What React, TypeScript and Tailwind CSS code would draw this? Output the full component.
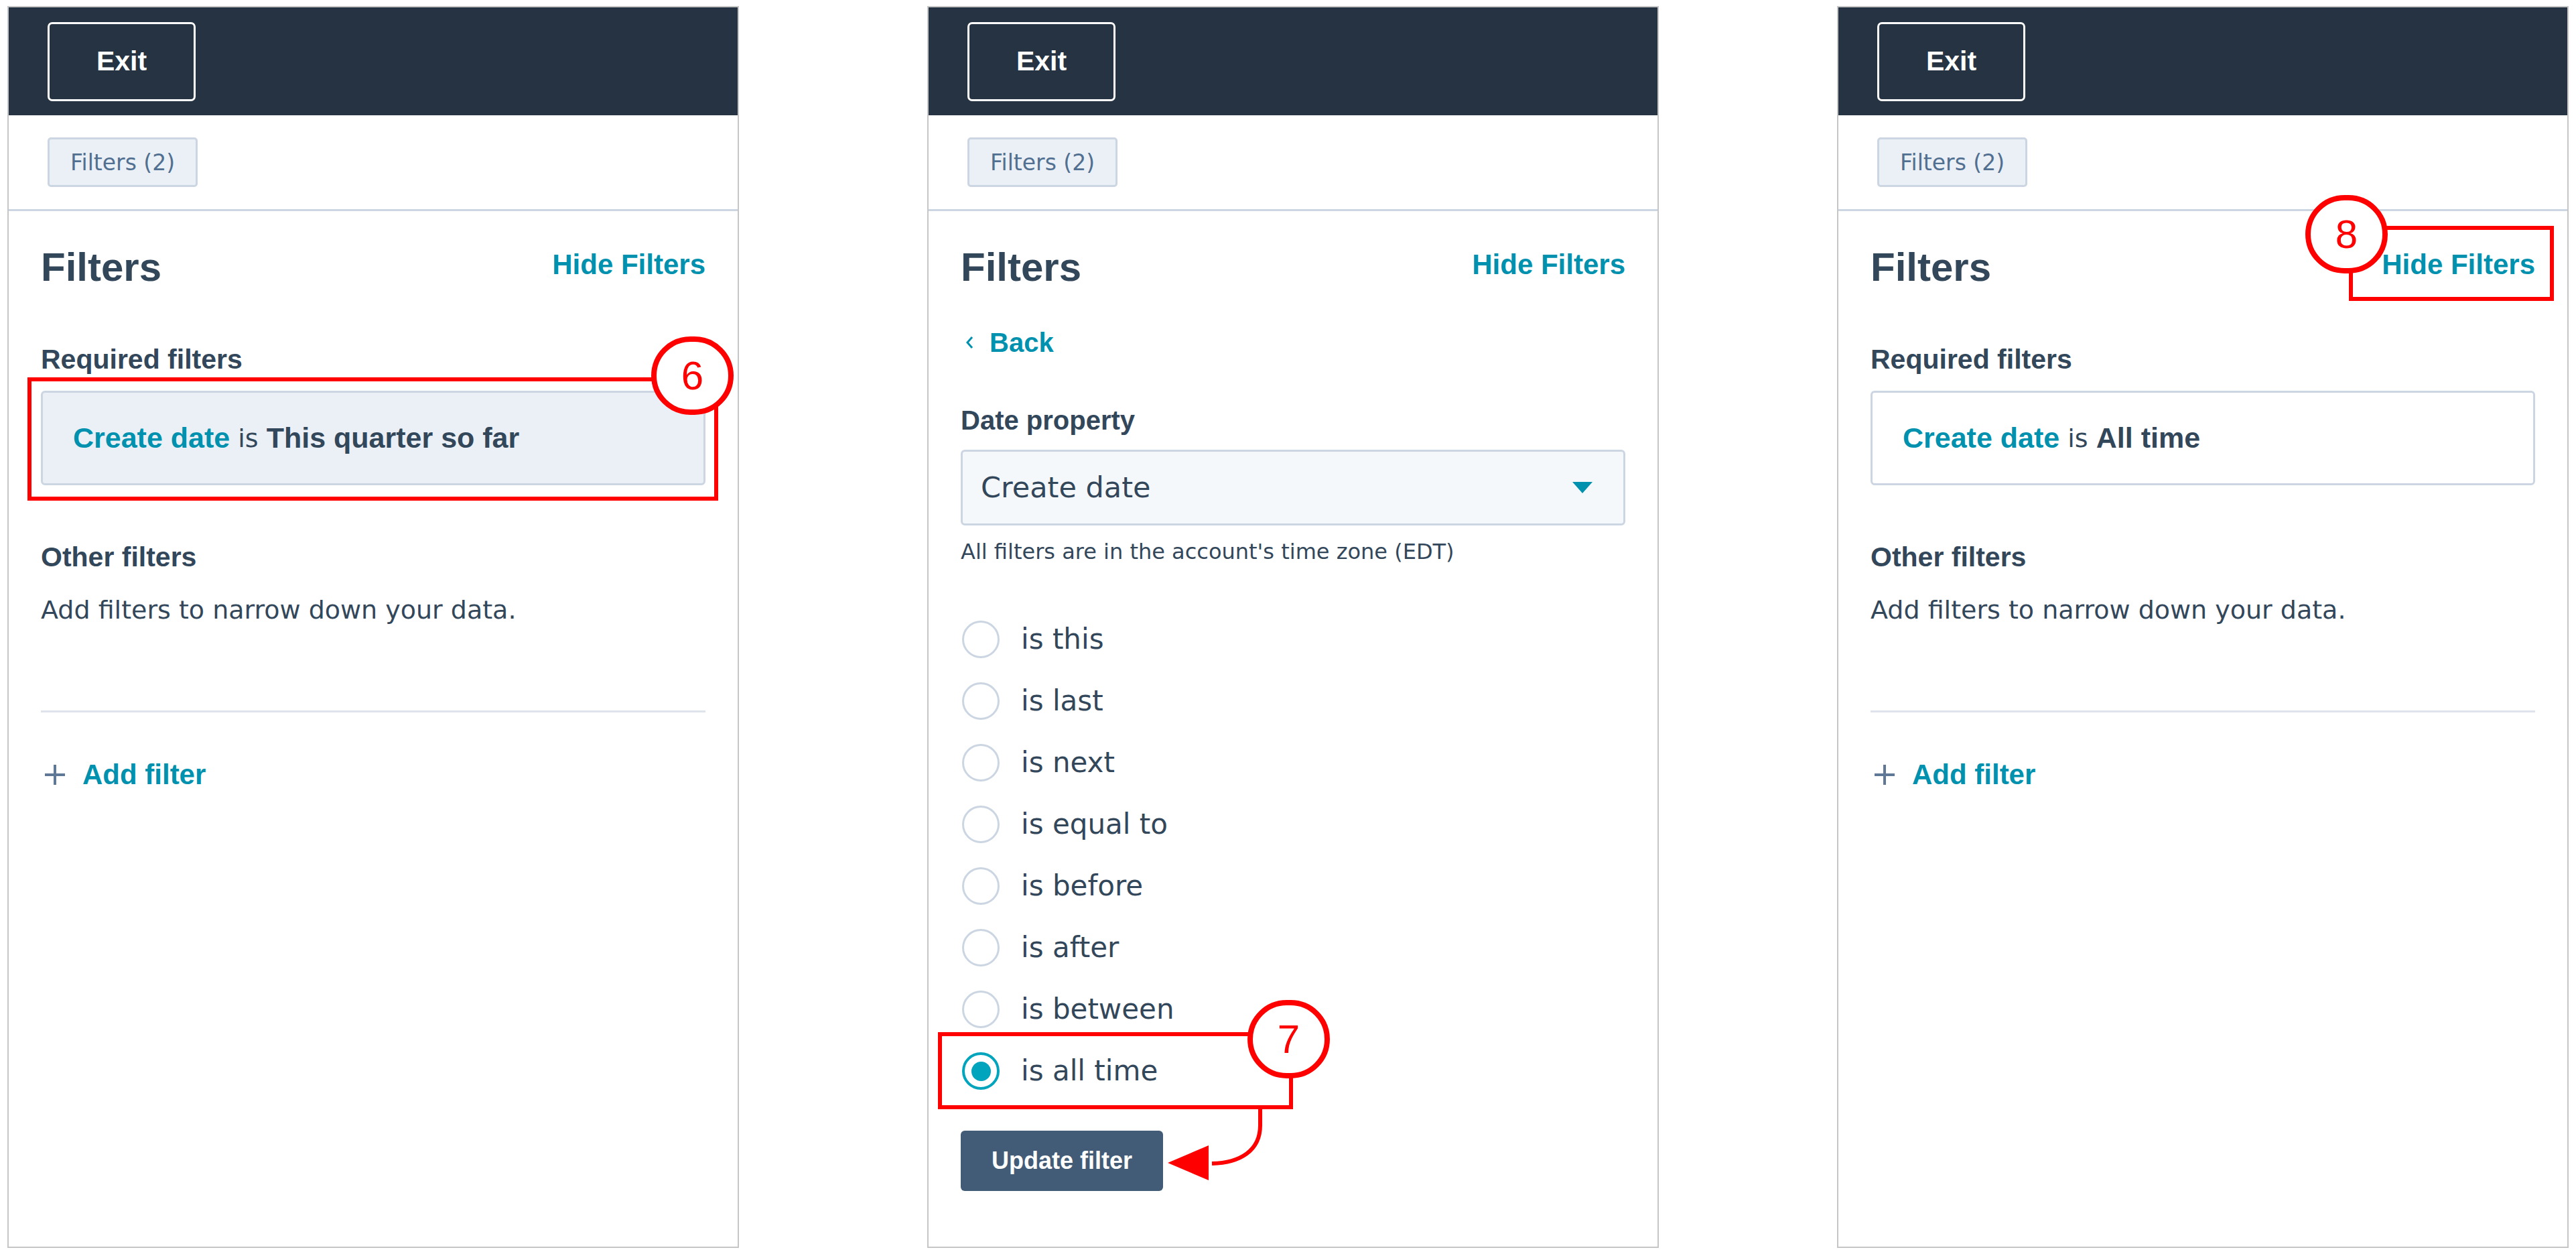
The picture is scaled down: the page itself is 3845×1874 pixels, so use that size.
import type { ReactNode } from "react";

const bold = "font-['Liberation_Sans',Arial,sans-serif] font-bold";
const body = "font-['DejaVu_Sans','Liberation_Sans',sans-serif]";

function Callout({ n, className }: { n: string; className: string }) {
  return (
    <div
      className={`absolute z-20 flex h-[117px] w-[123px] items-center justify-center rounded-full border-[8px] border-[#ff0000] bg-white font-['Liberation_Sans',sans-serif] text-[60px] leading-none text-[#ff0000] ${className}`}
    >
      {n}
    </div>
  );
}

function PanelShell({ children }: { children: ReactNode }) {
  return (
    <div className="relative flex h-[1853px] w-[1092px] shrink-0 flex-col border-2 border-[#c6c6c6] bg-white">
      <div className="flex h-[161px] items-center bg-[#253342] pl-[58px]">
        <button className={`flex h-[118px] w-[221px] items-center justify-center rounded-[7px] border-[3px] border-white text-[41px] leading-none text-white ${bold}`}>
          Exit
        </button>
      </div>
      <div className="flex h-[143px] items-center border-b-[3px] border-[#cbd6e2] pl-[58px]">
        <div className={`flex h-[74px] w-[224px] items-center justify-center rounded-[5px] border-[3px] border-[#cbd6e2] bg-[#eaf0f6] text-[33px] leading-none text-[#516f90] ${body}`}>
          Filters (2)
        </div>
      </div>
      <div className="flex flex-col px-[48px]">{children}</div>
    </div>
  );
}

function Header() {
  return (
    <div className="mt-[54px] flex items-start justify-between">
      <h2 className={`text-[60px] leading-none text-[#33475b] ${bold}`}>Filters</h2>
      <span className={`mt-[5px] text-[42px] leading-none text-[#0091ae] ${bold}`}>Hide Filters</span>
    </div>
  );
}

function FilterSummary({ value, tinted }: { value: string; tinted: boolean }) {
  return (
    <>
      <div className={`mt-[87px] text-[41px] leading-none text-[#33475b] ${bold}`}>Required filters</div>
      <div
        className={`mt-[26px] flex h-[141px] items-center rounded-[6px] border-[3px] border-[#cbd6e2] pl-[45px] text-[43px] leading-none text-[#33475b] ${tinted ? "bg-[#eaf0f6]" : "bg-white"}`}
      >
        <span className={`text-[#0091ae] ${bold}`}>Create date</span>
        <span className={`${body} text-[38px]`}>&nbsp;is&nbsp;</span>
        <span className={bold}>{value}</span>
      </div>
      <div className={`mt-[87px] text-[41px] leading-none text-[#33475b] ${bold}`}>Other filters</div>
      <p className={`mt-[39px] text-[38px] leading-none text-[#33475b] ${body}`}>
        Add filters to narrow down your data.
      </p>
      <div className="mt-[131px] h-[3px] bg-[#dfe3eb]" />
      <div className="mt-[72px] flex items-center">
        <svg width="34" height="34" viewBox="0 0 34 34" className="ml-[4px]">
          <path d="M17 2v30M2 17h30" stroke="#5f7895" strokeWidth="4" />
        </svg>
        <span className={`ml-[24px] text-[42px] leading-none text-[#0091ae] ${bold}`}>Add filter</span>
      </div>
    </>
  );
}

const operators = [
  "is this",
  "is last",
  "is next",
  "is equal to",
  "is before",
  "is after",
  "is between",
  "is all time",
];

function DateEditor() {
  return (
    <>
      <div className="mt-[62px] flex items-center">
        <svg width="14" height="22" viewBox="0 0 14 22" className="ml-[6px]">
          <path d="M11 3 4 11l7 8" fill="none" stroke="#0091ae" strokeWidth="3" />
        </svg>
        <span className={`ml-[23px] text-[40px] leading-none text-[#0091ae] ${bold}`}>Back</span>
      </div>
      <div className={`mt-[76px] text-[40px] leading-none text-[#33475b] ${bold}`}>Date property</div>
      <div className="mt-[24px] flex h-[113px] items-center justify-between rounded-[6px] border-[3px] border-[#cbd6e2] bg-[#f5f8fa] pl-[27px] pr-[46px]">
        <span className={`text-[43px] leading-none text-[#33475b] ${body}`}>Create date</span>
        <svg width="30" height="17" viewBox="0 0 30 17">
          <path d="M0 0h30L15 17z" fill="#0091ae" />
        </svg>
      </div>
      <p className={`mt-[23px] text-[32px] leading-none text-[#33475b] ${body}`}>
        All filters are in the account&apos;s time zone (EDT)
      </p>
      <div className="mt-[69px] flex flex-col">
        {operators.map((op, i) => {
          const checked = i === operators.length - 1;
          return (
            <label key={op} className="flex h-[92px] items-center">
              <span
                className={`ml-[2px] flex h-[56px] w-[56px] items-center justify-center rounded-full ${checked ? "border-[4px] border-[#00a4bd]" : "border-[3px] border-[#cbd6e2]"}`}
              >
                {checked && <span className="h-[29px] w-[29px] rounded-full bg-[#00a4bd]" />}
              </span>
              <span className={`ml-[32px] text-[42px] leading-none text-[#33475b] ${body}`}>{op}</span>
            </label>
          );
        })}
      </div>
      <button className={`mt-[43px] flex h-[90px] w-[302px] items-center justify-center rounded-[6px] bg-[#425b76] text-[36px] leading-none text-white ${bold}`}>
        Update filter
      </button>
    </>
  );
}

export default function App() {
  return (
    <div className="flex h-[1874px] w-[3845px] bg-white pl-[11px] pt-[9px]">
      <PanelShell>
        <Header />
        <FilterSummary value="This quarter so far" tinted />
        <div className="absolute left-[28px] top-[552px] z-10 h-[184px] w-[1031px] border-[6px] border-[#ff0000]" />
        <Callout n="6" className="left-[959px] top-[491px]" />
      </PanelShell>

      <div className="ml-[281px]">
        <PanelShell>
          <Header />
          <DateEditor />
          <div className="absolute left-[14px] top-[1529px] z-10 h-[115px] w-[530px] border-[6px] border-[#ff0000]" />
          <Callout n="7" className="left-[476px] top-[1481px]" />
          <svg
            className="absolute left-[340px] top-[1638px] z-10"
            width="170"
            height="140"
            viewBox="0 0 170 140"
          >
            <path d="M155 6v24c0 38-30 56-72 57" fill="none" stroke="#ff0000" strokeWidth="6" />
            <path d="M17 86 78 60v52z" fill="#ff0000" />
          </svg>
        </PanelShell>
      </div>

      <div className="ml-[266px]">
        <PanelShell>
          <Header />
          <FilterSummary value="All time" tinted={false} />
          <div className="absolute left-[762px] top-[326px] z-10 h-[112px] w-[306px] border-[6px] border-[#ff0000]" />
          <Callout n="8" className="left-[697px] top-[280px]" />
        </PanelShell>
      </div>
    </div>
  );
}
